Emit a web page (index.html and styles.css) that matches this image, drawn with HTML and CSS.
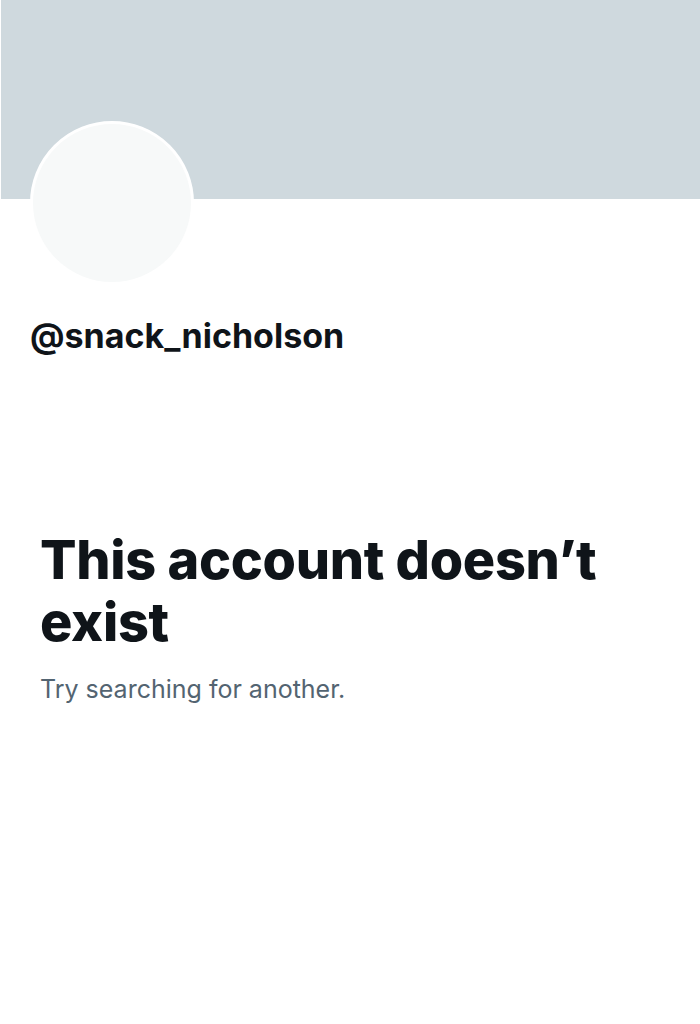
FILE: index.html
```html
<!DOCTYPE html>
<html lang="en">
<head>
  <meta charset="UTF-8" />
  <meta name="viewport" content="width=device-width, initial-scale=1" />
  <title>Profile</title>
  <link rel="stylesheet" href="styles.css">
</head>
<body>
  <div class="banner"></div>

  <div class="profile">
    <div class="avatar"></div>
    <div class="handle">@snack_nicholson</div>
  </div>

  <div class="empty">
    <h1>This account doesn’t exist</h1>
    <p>Try searching for another.</p>
  </div>
</body>
</html>
```

FILE: styles.css
```css
body {
  font-family: Inter, "Noto Sans", sans-serif;
  background: #fff;
  color: #0f1419;
  margin: 0;
}

.banner {
  height: 199px;
  background: #cfd9de;
  margin-left: 1px;
}

.profile {
  padding: 0 30px;
}

.avatar {
  width: 158px;
  height: 158px;
  margin-top: -78px;
  border: 3px solid #fff;
  border-radius: 50%;
  background: #f7f9f9;
}

.handle {
  margin-top: 31px;
  font-size: 34px;
  font-weight: 700;
  line-height: 40px;
}

.empty {
  padding: 0 40px;
  margin-top: 173px;
}

.empty h1 {
  margin: 0;
  font-size: 54px;
  font-weight: 800;
  line-height: 62px;
  letter-spacing: -0.3px;
}

.empty p {
  margin: 20px 0 0;
  font-size: 25px;
  line-height: 32px;
  color: #536471;
}
```
